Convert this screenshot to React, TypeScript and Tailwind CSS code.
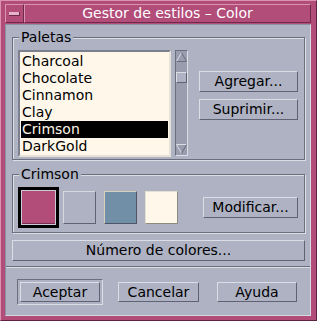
import React from "react";

const LIGHT = "border-t-[#dcdee6] border-l-[#dcdee6] border-b-[#5f6272] border-r-[#5f6272]";

function Btn({ label, className = "" }: { label: string; className?: string }) {
  return (
    <div
      className={`h-[21px] flex items-center justify-center border ${LIGHT} text-[14px] leading-[17px] text-black ${className}`}
    >
      {label}
    </div>
  );
}

function Arrow({ up }: { up: boolean }) {
  return (
    <div className="h-[12px] w-full flex items-center justify-center">
      <svg width="11" height="10" viewBox="0 0 11 10">
        {up ? (
          <>
            <path d="M0.5 9.5 L5.5 0.5" stroke="#dcdee6" strokeWidth="1" fill="none" />
            <path d="M5.5 0.5 L10.5 9.5 L0.5 9.5" stroke="#6b6e7d" strokeWidth="1" fill="none" />
          </>
        ) : (
          <>
            <path d="M0.5 0.5 L10.5 0.5 M0.5 0.5 L5.5 9.5" stroke="#dcdee6" strokeWidth="1" fill="none" />
            <path d="M5.5 9.5 L10.5 0.5" stroke="#6b6e7d" strokeWidth="1" fill="none" />
          </>
        )}
      </svg>
    </div>
  );
}

export default function App() {
  const items = ["Charcoal", "Chocolate", "Cinnamon", "Clay", "Crimson", "DarkGold"];
  return (
    <div className="w-[317px] h-[321px] font-['DejaVu_Sans',sans-serif] text-[14px] text-black bg-[#b24d7a] flex flex-col pt-[3px] pl-[4px] pr-[5px] pb-[4px] border border-t-[#dc92b3] border-l-[#dc92b3] border-r-[#5c2440] border-b-[#5c2440]">
      {/* Title bar */}
      <div className="flex h-[19px]">
        <div className="w-[19px] h-full border border-t-[#dc92b3] border-l-[#dc92b3] border-b-[#6e2a4a] border-r-[#6e2a4a] flex items-center justify-center">
          <div className="w-[11px] h-[4px] bg-[#e7b3ca] border-b border-r border-[#6e2a4a]" />
        </div>
        <div className="flex-1 h-full border border-t-[#dc92b3] border-l-[#dc92b3] border-b-[#6e2a4a] border-r-[#6e2a4a] flex items-center justify-center text-white text-[14px] leading-[17px]">
          Gestor de estilos – Color
        </div>
      </div>

      {/* Body */}
      <div className="mt-[1px] flex-1 bg-[#aeb2c3] border border-t-[#8d90a0] border-l-[#8d90a0] border-b-[#d6d8e2] border-r-[#d6d8e2] flex flex-col">
        {/* Paletas */}
        <fieldset className="mt-[4px] ml-[6px] mr-[5px] border border-[#6b6e7d] shadow-[inset_1px_1px_0_#dcdee6,1px_1px_0_#dcdee6]">
          <legend className="ml-[6px] px-[2px] bg-[#aeb2c3] text-[14px] leading-[16px]">Paletas</legend>
          <div className="flex pt-[5px] pl-[5px] pb-[2px]">
            <div className="w-[153px] h-[107px] bg-[#fff7e9] border-2 border-t-[#7c7f8e] border-l-[#7c7f8e] border-b-[#e6e2d8] border-r-[#e6e2d8] p-[1px] flex flex-col">
              {items.map((it) => (
                <div
                  key={it}
                  className={`h-[17px] leading-[17px] pl-[1px] text-[14px] ${it === "Crimson" ? "bg-black text-[#fff7e9]" : "text-black"}`}
                >
                  {it}
                </div>
              ))}
            </div>
            <div className="ml-[4px] w-[13px] h-[106px] bg-[#9a9dae] border border-t-[#6b6e7d] border-l-[#6b6e7d] border-b-[#dcdee6] border-r-[#dcdee6] flex flex-col">
              <Arrow up={true} />
              <div className="flex-1 flex flex-col">
                <div className="mt-[9px] h-[11px] w-full bg-[#aeb2c3] border border-t-[#dcdee6] border-l-[#dcdee6] border-b-[#5f6272] border-r-[#5f6272]" />
              </div>
              <Arrow up={false} />
            </div>
            <div className="ml-[11px] mt-[21px] flex flex-col gap-[7px]">
              <Btn label="Agregar..." className="w-[99px]" />
              <Btn label="Suprimir..." className="w-[99px]" />
            </div>
          </div>
        </fieldset>

        {/* Crimson */}
        <fieldset className="mt-[6px] ml-[6px] mr-[5px] border border-[#6b6e7d] shadow-[inset_1px_1px_0_#dcdee6,1px_1px_0_#dcdee6]">
          <legend className="ml-[6px] px-[2px] bg-[#aeb2c3] text-[14px] leading-[16px]">Crimson</legend>
          <div className="flex items-center pt-[5px] pl-[5px] pb-[4px] pr-[6px]">
            <div className="w-[41px] h-[41px] border-[3px] border-black bg-[#c9cbd6] p-[1px]">
              <div className="w-full h-full bg-[#b24d7a] border-b border-[#7a2f52]" />
            </div>
            <div className="ml-[4px] w-[33px] h-[33px] bg-[#aeb2c3] border border-t-[#d6d8e0] border-l-[#d6d8e0] border-b-[#5f6272] border-r-[#5f6272]" />
            <div className="ml-[8px] w-[33px] h-[33px] bg-[#7190a8] border border-t-[#d6d0bc] border-l-[#d6d0bc] border-b-[#4d5566] border-r-[#4d5566]" />
            <div className="ml-[8px] w-[33px] h-[33px] bg-[#fff7e9] border border-t-[#e6e0d0] border-l-[#e6e0d0] border-b-[#8d8a80] border-r-[#8d8a80]" />
            <Btn label="Modificar..." className="ml-auto w-[95px]" />
          </div>
        </fieldset>

        <Btn label="Número de colores..." className="mt-[7px] ml-[6px] mr-[5px]" />

        <div className="mt-[5px] h-[2px] border-t border-t-[#6b6e7d] border-b border-b-[#dcdee6]" />

        <div className="mt-[11px] flex items-center">
          <div className="ml-[11px] w-[86px] h-[26px] border border-t-[#6b6e7d] border-l-[#6b6e7d] border-b-[#dcdee6] border-r-[#dcdee6] p-[2px]">
            <div className={`w-full h-full flex items-center justify-center border ${LIGHT} text-[14px] leading-[17px]`}>Aceptar</div>
          </div>
          <div className={`ml-[15px] w-[81px] h-[20px] flex items-center justify-center border ${LIGHT} text-[14px] leading-[17px]`}>Cancelar</div>
          <div className={`ml-[18px] w-[80px] h-[20px] flex items-center justify-center border ${LIGHT} text-[14px] leading-[17px]`}>Ayuda</div>
        </div>
      </div>
    </div>
  );
}
